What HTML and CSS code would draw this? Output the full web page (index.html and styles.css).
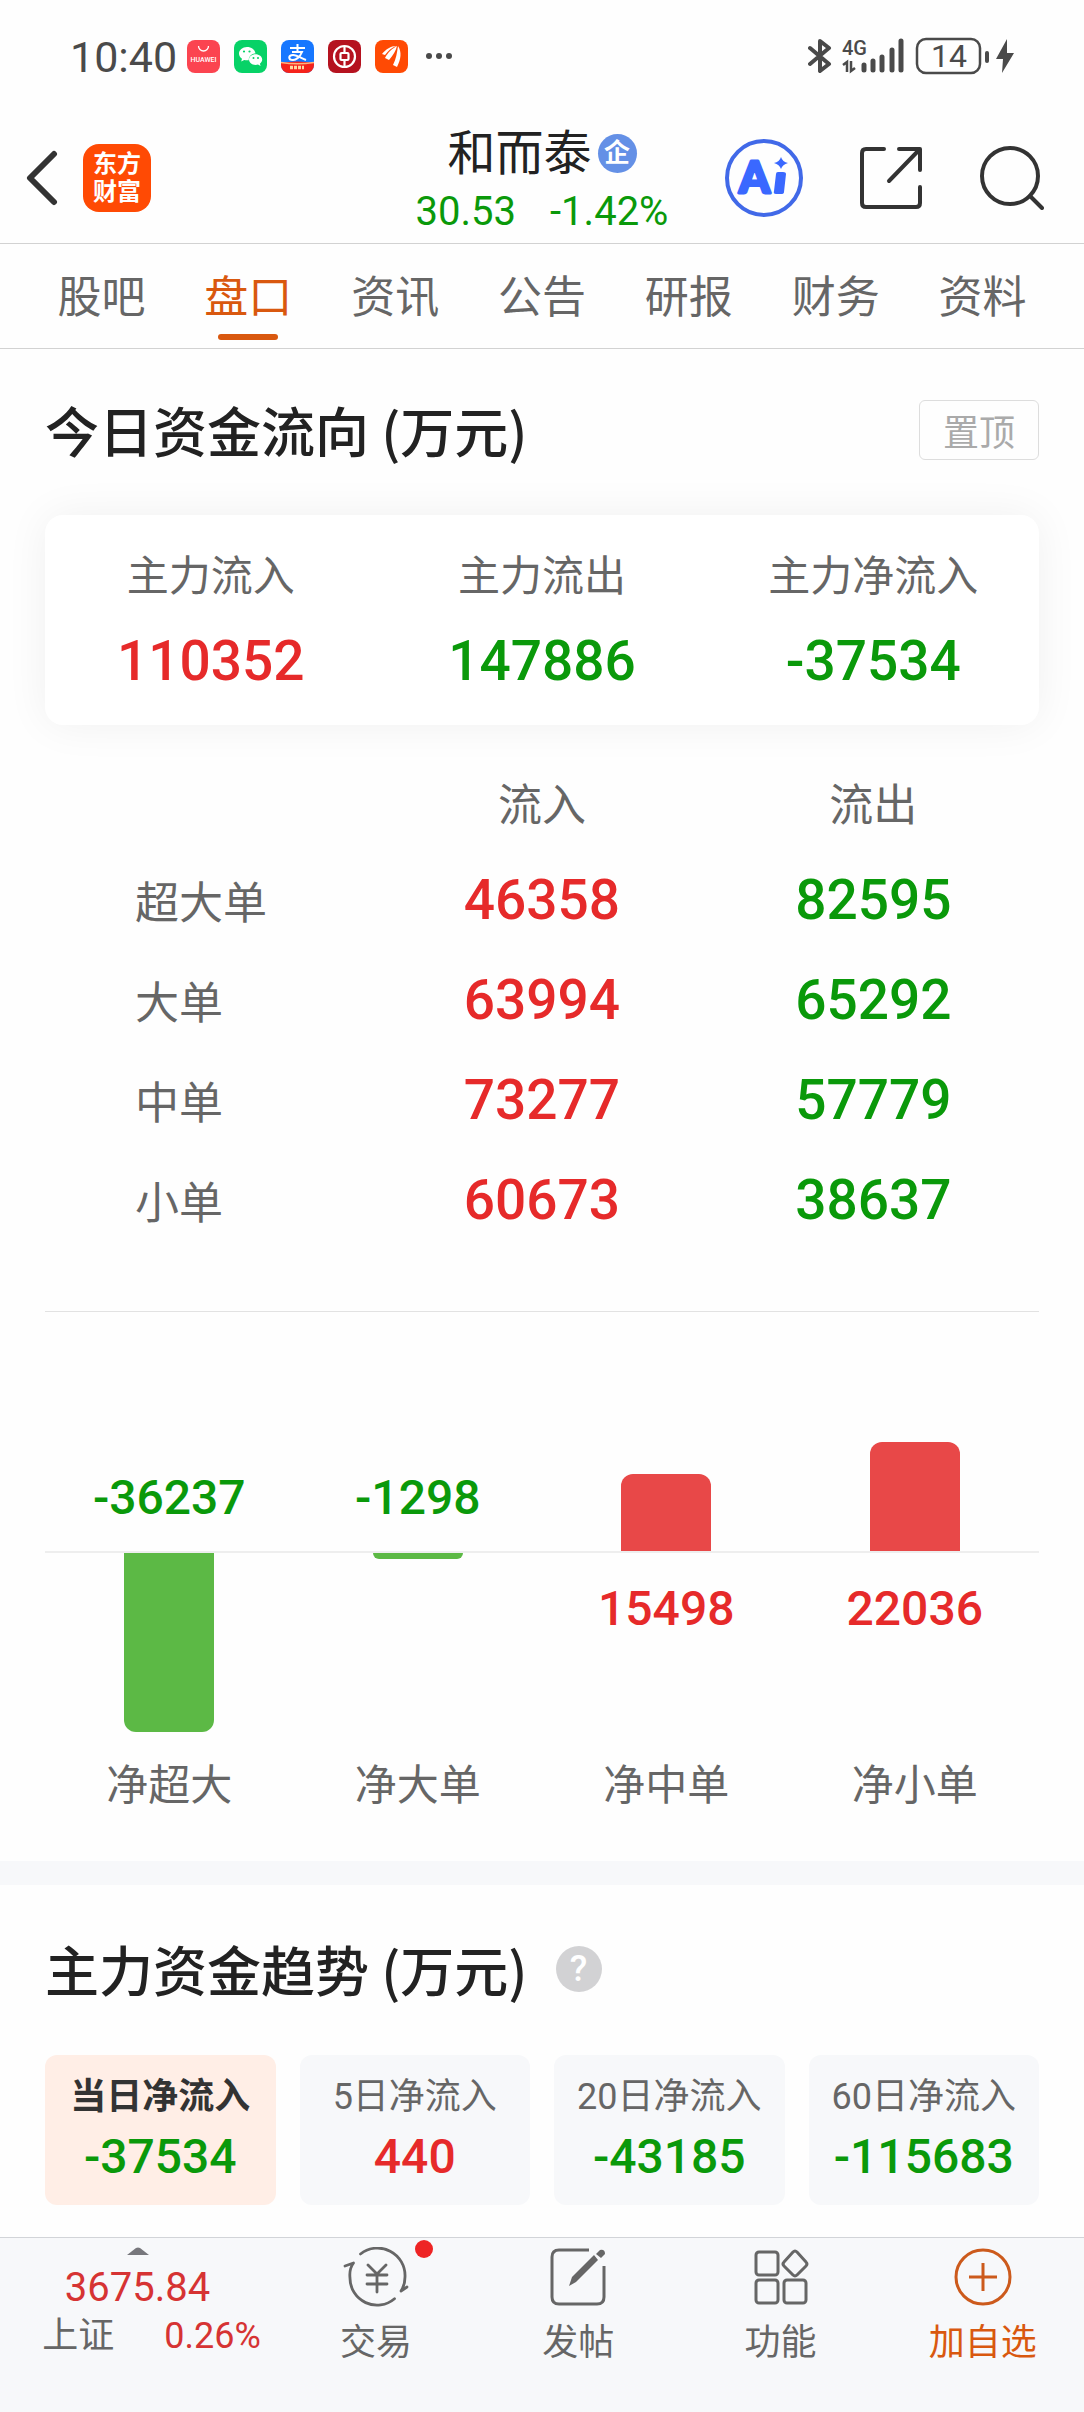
FILE: index.html
```html
<!DOCTYPE html>
<html lang="zh-CN">
<head>
    <meta charset="UTF-8">
    <meta name="viewport" content="width=device-width, initial-scale=1.0">
    <title>和而泰 - 盘口</title>
    <link rel="stylesheet" href="styles.css">
</head>
<body>
<!-- 状态栏 -->
<div class="status">
    <span class="time">10:40</span>
    <div class="apps">
        <svg class="app" viewBox="0 0 33 33">
            <rect width="33" height="33" rx="8" fill="#fb4450"/>
            <path d="M11.500 6a5 5 0 0 0 10 0" fill="none" stroke="#fff" stroke-width="1.300"/>
            <text x="16.500" y="22" text-anchor="middle" class="app-text">HUAWEI</text>
        </svg>
        <svg class="app" viewBox="0 0 33 33">
            <rect width="33" height="33" rx="8" fill="#07d267"/>
            <path d="M13 7c-4.500 0-8 3-8 6.600 0 2.200 1.200 4 3 5.200l-.8 2.600 3-1.500c1.500.5 3.300.6 4.500.3 0-4 3.300-6.600 6.800-6.600C21 9.500 17.300 7 13 7z" fill="#fff"/>
            <path d="M21.500 14.300c-3.700 0-6.500 2.300-6.500 5.300s2.800 5.400 6.500 5.400c.9 0 1.800-.1 2.500-.4l2.600 1.300-.7-2.200c1.400-1 2.300-2.500 2.300-4.100 0-3-3-5.300-6.700-5.300z" fill="#fff"/>
            <g fill="#07d267"><circle cx="10" cy="11.500" r="1.100"/><circle cx="15.500" cy="11.500" r="1.100"/><circle cx="19.500" cy="18" r="1"/><circle cx="24" cy="18" r="1"/></g>
        </svg>
        <svg class="app" viewBox="0 0 33 33">
            <rect width="33" height="33" rx="8" fill="#1677ff"/>
            <path d="M0 23q16-3 33 0v2a8 8 0 0 1-8 8H8a8 8 0 0 1-8-8z" fill="#f5221b"/>
            <path d="M0 22.500q16 2.500 33 0" fill="none" stroke="#ffb37a" stroke-width="1.500"/>
            <path d="M9 8h15M16.500 4v8M11 12h10c-2 5-6 8-9 8-5 0-5-5 0-5 4 0 8 3 13 5" fill="none" stroke="#fff" stroke-width="2"/>
            <path d="M9 27.500h14" stroke="#ffd9a0" stroke-width="3.500" stroke-dasharray="3 1"/>
        </svg>
        <svg class="app" viewBox="0 0 33 33">
            <rect width="33" height="33" rx="8" fill="#b5121f"/>
            <circle cx="16.500" cy="16.500" r="10.500" fill="none" stroke="#fff" stroke-width="2.200"/>
            <rect x="12.500" y="13" width="8" height="7" rx="1" fill="none" stroke="#fff" stroke-width="2.200"/>
            <path d="M16.500 6v7M16.500 20v7" stroke="#fff" stroke-width="2.200"/>
        </svg>
        <svg class="app" viewBox="0 0 33 33">
            <rect width="33" height="33" rx="8" fill="#ff4a04"/>
            <path d="M7 14c4-5 9-8 14-8-5 2-8 5-11 9zM10 18c3-6 8-10 12-12-1 5-4 9-8 14zM18 25c3-6 4-12 5-19 4 6 3 13-1 21z" fill="#fff"/>
        </svg>
    </div>
    <svg class="dots" viewBox="0 0 28 8"><g fill="#4a4a4a"><circle cx="4" cy="4" r="3"/><circle cx="14" cy="4" r="3"/><circle cx="24" cy="4" r="3"/></g></svg>
    <svg class="signal" viewBox="0 0 208 40">
        <!-- 蓝牙 -->
        <path d="M2 12l19 16-9 7V5l9 7L2 28" fill="none" stroke="#4a4a4a" stroke-width="4" stroke-linecap="round" stroke-linejoin="round"/>
        <text x="34" y="19" class="net">4G</text>
        <path d="M35 29l4-3v10M43 25v10l4-3" fill="none" stroke="#4a4a4a" stroke-width="2.500"/>
        <path d="M56 29v5M65 25v9M74 21v13M84 14v20M93 5v29" stroke="#4a4a4a" stroke-width="5" stroke-linecap="round"/>
        <rect x="109" y="3" width="63" height="34" rx="9" fill="none" stroke="#4a4a4a" stroke-width="2.500"/>
        <text x="141" y="31" text-anchor="middle" class="power">14</text>
        <path d="M179 17v8" stroke="#4a4a4a" stroke-width="4" stroke-linecap="round"/>
        <path d="M199 3l-11 20h7l-1 14 12-20h-7z" fill="#4a4a4a"/>
    </svg>
</div>

<!-- 顶部 -->
<header class="header">
    <div class="header-left">
        <button class="icon-btn" aria-label="返回">
            <svg class="back" viewBox="0 0 32 56"><path d="M28 4L4 28l24 24" fill="none" stroke="#333" stroke-width="6" stroke-linecap="round" stroke-linejoin="round"/></svg>
        </button>
        <a href="#" class="logo">东方<br>财富</a>
    </div>
    <div class="stock">
        <h1 class="stock-name">和而泰<span class="badge">企</span></h1>
        <div class="stock-price green"><span>30.53</span><span>-1.42%</span></div>
    </div>
    <div class="header-right">
        <button class="icon-btn" aria-label="AI">
            <svg class="ai" viewBox="0 0 80 80">
                <circle cx="40" cy="40" r="37" fill="none" stroke="#4169e8" stroke-width="4"/>
                <text x="15" y="55" class="ai-text">A</text>
                <path d="M52 36q0-2 2-2h5q3 0 3 2l-2 18q0 2-3 2h-5q-3 0-2-3zM57 19q1.500 5 7 6-5.500 1.500-7 6-1.500-4.500-7-6 5.500-1 7-6z" fill="#3a68ff"/>
            </svg>
        </button>
        <button class="icon-btn" aria-label="分享">
            <svg class="share" viewBox="0 0 64 64"><path d="M24 3H6Q2 3 2 7v50q0 4 4 4h50q4 0 4-4V41M60 24V3H39M59 4L29 35" fill="none" stroke="#333" stroke-width="4" stroke-linecap="round" stroke-linejoin="round"/></svg>
        </button>
        <button class="icon-btn" aria-label="搜索">
            <svg class="search" viewBox="0 0 64 64"><g fill="none" stroke="#333" stroke-width="4" stroke-linecap="round"><circle cx="30" cy="30" r="28"/><path d="M50 50l12 12"/></g></svg>
        </button>
    </div>
</header>

<nav class="tabs">
    <a href="#">股吧</a>
    <a href="#" class="active">盘口</a>
    <a href="#">资讯</a>
    <a href="#">公告</a>
    <a href="#">研报</a>
    <a href="#">财务</a>
    <a href="#">资料</a>
</nav>

<main>
    <!-- 今日资金流向 -->
    <section class="section">
        <div class="title-row">
            <h2>今日资金流向 (万元)</h2>
            <button class="top-btn">置顶</button>
        </div>
        <div class="summary">
            <div><p>主力流入</p><b class="red">110352</b></div>
            <div><p>主力流出</p><b class="green">147886</b></div>
            <div><p>主力净流入</p><b class="green">-37534</b></div>
        </div>
        <table class="orders">
            <thead>
                <tr><td></td><th>流入</th><th>流出</th></tr>
            </thead>
            <tbody>
                <tr><th>超大单</th><td class="red">46358</td><td class="green">82595</td></tr>
                <tr><th>大单</th><td class="red">63994</td><td class="green">65292</td></tr>
                <tr><th>中单</th><td class="red">73277</td><td class="green">57779</td></tr>
                <tr><th>小单</th><td class="red">60673</td><td class="green">38637</td></tr>
            </tbody>
        </table>
        <div class="chart">
            <div class="col">
                <div class="up"><b class="green">-36237</b></div>
                <div class="down"><i class="bar" style="height: 179px"></i></div>
                <p>净超大</p>
            </div>
            <div class="col">
                <div class="up"><b class="green">-1298</b></div>
                <div class="down"><i class="bar" style="height: 6px"></i></div>
                <p>净大单</p>
            </div>
            <div class="col">
                <div class="up"><i class="bar" style="height: 77px"></i></div>
                <div class="down"><b class="red">15498</b></div>
                <p>净中单</p>
            </div>
            <div class="col">
                <div class="up"><i class="bar" style="height: 109px"></i></div>
                <div class="down"><b class="red">22036</b></div>
                <p>净小单</p>
            </div>
        </div>
    </section>

    <!-- 主力资金趋势 -->
    <section class="section trend">
        <div class="title-row">
            <h2>主力资金趋势 (万元)</h2>
            <button class="help" aria-label="说明">?</button>
        </div>
        <div class="periods">
            <button class="period on"><span>当日净流入</span><b class="green">-37534</b></button>
            <button class="period"><span>5日净流入</span><b class="red">440</b></button>
            <button class="period"><span>20日净流入</span><b class="green">-43185</b></button>
            <button class="period"><span>60日净流入</span><b class="green">-115683</b></button>
        </div>
    </section>
</main>

<!-- 底部导航 -->
<footer class="bottom">
    <a href="#" class="index">
        <svg class="arrow" viewBox="0 0 22 8"><path d="M0 8l9-7q2-1 4 0l9 7z" fill="#77777c"/></svg>
        <span class="point">3675.84</span>
        <span class="rate"><span>上证</span><em>0.26%</em></span>
    </a>
    <a href="#" class="item">
        <span class="icon-box">
            <svg class="icon" viewBox="0 0 66 60">
                <g fill="none" stroke="#666" stroke-width="2.800" stroke-linecap="round" stroke-linejoin="round">
                    <path d="M17.500 7A27.500 27.500 0 0 1 62 30Q62 38 58 44l6-4"/>
                    <path d="M2 19l8.500-3Q6 22 7 31A27 27 0 0 0 51.500 51.700"/>
                    <path d="M25 18l9 9 9-9M24 28h20M24 37h20M34 27v18"/>
                </g>
            </svg>
            <i class="dot"></i>
        </span>
        交易
    </a>
    <a href="#" class="item">
        <svg class="icon" viewBox="0 0 66 60">
            <path d="M44 3H14Q7 3 7 10v40q0 7 7 7h38q7 0 7-7V19" fill="none" stroke="#666" stroke-width="3"/>
            <path d="M24 39l3-9 22-22 4 5-22 22zM51 7l4-4q5-1 5 4l-4 4z" fill="#666"/>
        </svg>
        发帖
    </a>
    <a href="#" class="item">
        <svg class="icon" viewBox="0 0 66 60">
            <g fill="none" stroke="#666" stroke-width="3">
                <rect x="8" y="5" width="22" height="23" rx="3"/>
                <rect x="8" y="33" width="22" height="23" rx="3"/>
                <rect x="36" y="33" width="22" height="23" rx="3"/>
                <path d="M45 5q2-2 4 0l9 10q2 2 0 4l-9 9q-2 2-4 0l-9-9q-2-2 0-4z"/>
            </g>
        </svg>
        功能
    </a>
    <a href="#" class="item add">
        <svg class="icon" viewBox="0 0 66 60"><g fill="none" stroke="#cc5a1c" stroke-width="3"><circle cx="33" cy="30" r="27"/><path d="M33 16v28M19 30h28"/></g></svg>
        加自选
    </a>
</footer>
</body>
</html>
```
FILE: styles.css
```css
* {
    box-sizing: border-box;
}
body {
    display: flex;
    flex-direction: column;
    min-height: 100vh;
    margin: 0;
    background-color: #fefefe;
    color: #666;
    font-family: Roboto, "Noto Sans CJK SC", sans-serif;
}
h1, h2, p {
    margin: 0;
    font-weight: 400;
}
a {
    color: inherit;
    text-decoration: none;
}
button {
    padding: 0;
    border: none;
    background: none;
    color: inherit;
    font-family: inherit;
    cursor: pointer;
}
svg {
    display: block;
}
b {
    font-weight: 500;
}
.red {
    color: #e62a2a;
}
.green {
    color: #0a990a;
}

/* 状态栏 */
.status {
    display: flex;
    align-items: center;
    height: 112px;
    padding: 0 68px 0 70px;
    color: #4a4a4a;
}
.time {
    width: 117px;
    padding-top: 2px;
    font-size: 43px;
}
.apps {
    display: flex;
    gap: 14px;
}
.app {
    width: 33px;
    height: 33px;
}
.app-text {
    fill: #fff;
    font-size: 7px;
    font-weight: 500;
}
.dots {
    width: 28px;
    height: 8px;
    margin-left: 17px;
}
.signal {
    width: 208px;
    height: 40px;
    margin-left: auto;
}
.net {
    fill: #4a4a4a;
    font-size: 20px;
    font-weight: 500;
}
.power {
    fill: #4a4a4a;
    font-size: 32px;
}

/* 顶部 */
.header {
    display: grid;
    grid-template-columns: 1fr auto 1fr;
    align-items: center;
    height: 132px;
    padding: 0 40px 0 26px;
    border-bottom: 1px solid #d2d2d2;
}
.header-left, .header-right {
    display: flex;
    align-items: center;
}
.header-left {
    gap: 25px;
}
.header-right {
    justify-content: flex-end;
    gap: 56px;
}
.back {
    width: 32px;
    height: 56px;
}
.logo {
    width: 68px;
    height: 68px;
    padding-top: 6px;
    border-radius: 16px;
    background-color: #ff4a04;
    color: #fff;
    font-size: 24px;
    font-weight: 700;
    line-height: 28px;
    text-align: center;
}
.stock {
    padding: 8px 0 0 14px;
    text-align: center;
}
.stock-name {
    display: flex;
    align-items: center;
    justify-content: center;
    gap: 6px;
    color: #222;
    font-size: 48px;
    line-height: 60px;
}
.badge {
    width: 39px;
    height: 39px;
    border-radius: 50%;
    background-color: #6490e6;
    color: #fff;
    font-size: 26px;
    font-weight: 700;
    line-height: 38px;
}
.stock-price {
    display: flex;
    justify-content: center;
    gap: 34px;
    font-size: 40px;
    line-height: 56px;
}
.ai {
    width: 80px;
    height: 80px;
}
.ai-text {
    fill: #3a68ff;
    stroke: #3a68ff;
    stroke-width: 3px;
    stroke-linejoin: round;
    font-family: Lato, sans-serif;
    font-size: 44px;
    font-weight: 900;
}
.share, .search {
    width: 64px;
    height: 64px;
}

/* 标签 */
.tabs {
    display: flex;
    height: 105px;
    padding: 0 28px;
    border-bottom: 1px solid #d2d2d2;
}
.tabs a {
    display: flex;
    flex: 1;
    flex-direction: column;
    align-items: center;
    padding-top: 18px;
    font-size: 44px;
    line-height: 72px;
}
.tabs .active {
    color: #d9580f;
}
.tabs .active::after {
    content: "";
    width: 60px;
    height: 6px;
    border-radius: 3px;
    background-color: #d9580f;
}

/* 资金流向 */
.section {
    padding: 51px 45px 47px;
}
.title-row {
    display: flex;
    align-items: center;
    justify-content: space-between;
}
h2 {
    color: #222;
    font-family: "Noto Sans CJK SC", sans-serif;
    font-size: 54px;
    font-weight: 500;
    line-height: 60px;
}
.top-btn {
    width: 120px;
    height: 60px;
    border: 1px solid #ddd;
    border-radius: 6px;
    color: #aaa;
    font-size: 36px;
}
.summary {
    display: grid;
    grid-template-columns: repeat(3, 1fr);
    margin-top: 55px;
    padding: 34px 0 24px;
    border-radius: 18px;
    background-color: #fff;
    box-shadow: 0 0 44px rgba(0, 0, 0, 0.06);
    text-align: center;
}
.summary p {
    margin-bottom: 16px;
    font-size: 42px;
    line-height: 56px;
}
.summary b {
    display: block;
    font-size: 55px;
    line-height: 80px;
}
.orders {
    width: 100%;
    margin-top: 29px;
    border-collapse: collapse;
    table-layout: fixed;
}
.orders th, .orders td {
    height: 100px;
    padding: 0;
    font-size: 44px;
    font-weight: 400;
    text-align: center;
}
.orders thead th, .orders thead td {
    height: 96px;
}
.orders tbody th {
    padding-left: 90px;
    text-align: left;
}
.orders tbody td {
    font-size: 55px;
    font-weight: 500;
}
.chart {
    display: flex;
    margin-top: 61px;
    border-top: 1px solid #e2e2e2;
}
.col {
    flex: 1;
    font-size: 42px;
    line-height: 56px;
    text-align: center;
}
.col b {
    font-size: 48px;
}
.up, .down {
    display: flex;
    justify-content: center;
}
.up {
    align-items: flex-end;
    height: 241px;
    border-bottom: 2px solid #eee;
}
.down {
    align-items: flex-start;
    height: 205px;
}
.up b {
    margin-bottom: 25px;
}
.down b {
    margin-top: 28px;
}
.bar {
    width: 90px;
}
.up .bar {
    border-radius: 12px 12px 0 0;
    background-color: #e84848;
}
.down .bar {
    border-radius: 0 0 12px 12px;
    background-color: #5cb945;
}

/* 资金趋势 */
.trend {
    padding: 54px 45px 32px;
    border-top: 24px solid #f7f8fa;
}
.trend .title-row {
    justify-content: flex-start;
    gap: 28px;
}
.help {
    width: 46px;
    height: 46px;
    border-radius: 50%;
    background-color: #d2d2d4;
    color: #fff;
    font-size: 36px;
    font-weight: 500;
    line-height: 46px;
}
.periods {
    display: grid;
    grid-template-columns: repeat(4, 1fr);
    gap: 24px;
    margin-top: 56px;
}
.period {
    padding: 20px 0;
    border-radius: 12px;
    background-color: #f7f8fa;
    font-size: 36px;
    line-height: 44px;
}
.period span, .period b {
    display: block;
}
.period b {
    margin-top: 10px;
    font-size: 48px;
    line-height: 56px;
}
.period.on {
    background-color: #ffeee6;
}
.period.on span {
    color: #333;
    font-weight: 700;
}

/* 底部导航 */
.bottom {
    display: flex;
    height: 176px;
    margin-top: auto;
    border-top: 1px solid #d2d4d8;
    background-color: #f7f8fa;
    font-size: 36px;
}
.index {
    display: flex;
    flex-direction: column;
    align-items: center;
    width: 275px;
    padding-top: 9px;
    line-height: 48px;
}
.arrow {
    width: 22px;
    height: 8px;
    margin-bottom: 9px;
}
.point {
    color: #d63333;
    font-size: 40px;
}
.rate {
    display: flex;
    gap: 50px;
    margin-left: 28px;
}
.rate em {
    color: #d63333;
    font-style: normal;
}
.item {
    display: flex;
    flex: 1;
    flex-direction: column;
    align-items: center;
    padding-top: 9px;
    line-height: 72px;
}
.icon-box {
    position: relative;
}
.icon {
    width: 66px;
    height: 60px;
}
.dot {
    position: absolute;
    top: -7px;
    right: -24px;
    width: 18px;
    height: 18px;
    border-radius: 50%;
    background-color: #ee2424;
}
.add {
    color: #d9580f;
}
```
